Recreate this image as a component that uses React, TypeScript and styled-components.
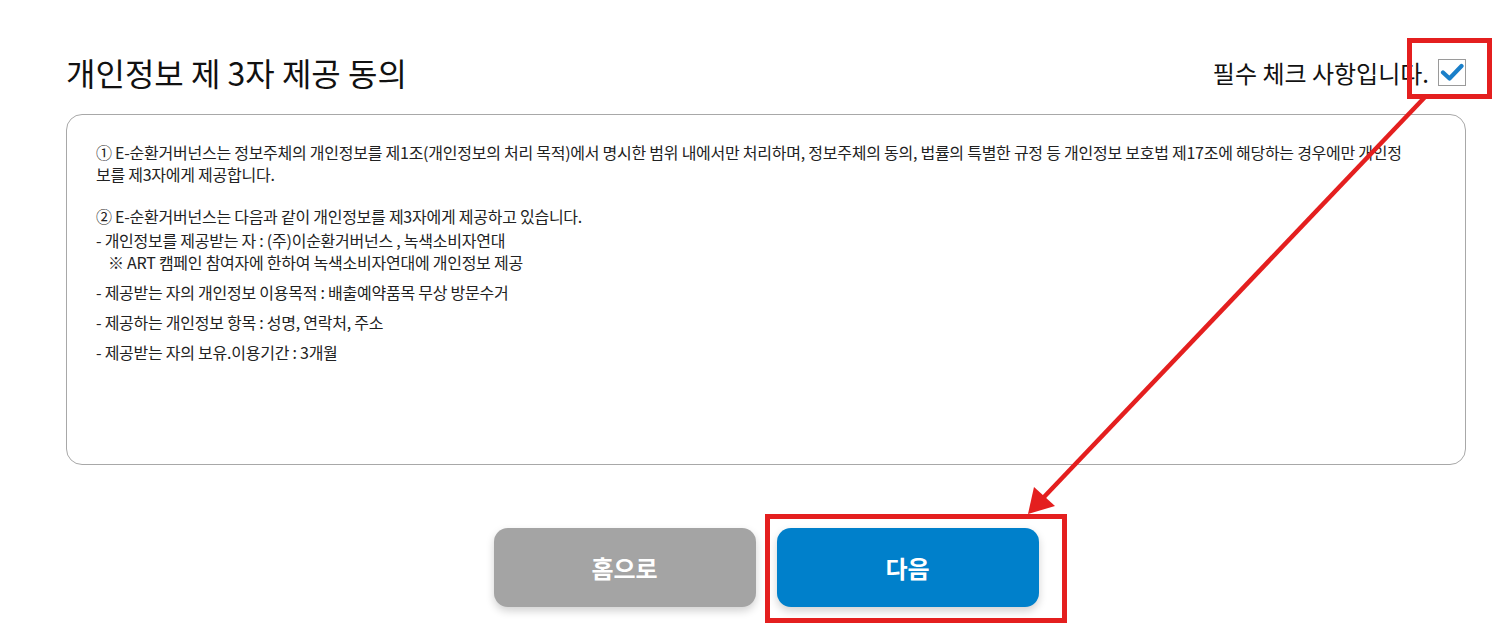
import styled, { createGlobalStyle } from "styled-components";

const GlobalStyle = createGlobalStyle`
  html, body {
    margin: 0;
    padding: 0;
    background: #ffffff;
  }
  body {
    font-family: "Noto Sans CJK KR", "Noto Sans", sans-serif;
    color: #222;
  }
`;

const Page = styled.div`
  position: relative;
  width: 1496px;
  height: 644px;
  padding-left: 66px;
  box-sizing: border-box;
  overflow: hidden;
`;

const Content = styled.div`
  width: 1400px;
`;

const Header = styled.div`
  display: flex;
  align-items: center;
  justify-content: space-between;
  height: 72px;
  margin-top: 36px;
`;

const Title = styled.h2`
  margin: 0;
  font-size: 32px;
  font-weight: 400;
  color: #111;
  letter-spacing: 0;
`;

const Required = styled.label`
  display: flex;
  align-items: center;
  gap: 9px;
  font-size: 24px;
  color: #111;
`;

const CheckBox = styled.span`
  display: flex;
  align-items: center;
  justify-content: center;
  width: 28px;
  height: 27px;
  box-sizing: border-box;
  border: 1px solid #9a9a9a;
  background: #fff;
`;

const TermsBox = styled.div`
  margin-top: 6px;
  height: 351px;
  box-sizing: border-box;
  border: 1px solid #a8a8a8;
  border-radius: 16px;
  padding: 26px 29px;
  font-size: 16px;
  line-height: 22px;
  color: #222;
  letter-spacing: -0.25px;
`;

const Para = styled.p`
  margin: 0 0 20px;
  white-space: nowrap;
`;

const Heading = styled.p`
  margin: 0 0 2px;
`;

const Item = styled.p`
  margin: 0 0 8px;
`;

const Note = styled.span`
  display: block;
  padding-left: 12px;
`;

const ButtonRow = styled.div`
  display: flex;
  justify-content: center;
  gap: 21px;
  margin-top: 63px;
`;

const Button = styled.button<{ $primary?: boolean }>`
  width: 262px;
  height: 79px;
  border: none;
  border-radius: 14px;
  background: ${(p) => (p.$primary ? "#0080cb" : "#a4a4a4")};
  color: #fff;
  font-family: "Noto Sans CJK KR", "Noto Sans", sans-serif;
  font-size: 24px;
  font-weight: 700;
  box-shadow: 0 4px 8px rgba(0, 0, 0, 0.18);
  cursor: pointer;
`;

const Annotation = styled.svg`
  position: absolute;
  left: 0;
  top: 0;
  pointer-events: none;
`;

const RED = "#e41f1f";

const App = () => {
  return (
    <>
      <GlobalStyle />
      <Page>
        <Content>
          <Header>
            <Title>개인정보 제 3자 제공 동의</Title>
            <Required>
              필수 체크 사항입니다.
              <CheckBox>
                <svg width="24" height="20" viewBox="0 0 24 20">
                  <path
                    d="M3 10.5 L9.5 16.5 L21.5 4"
                    fill="none"
                    stroke="#1a7fc9"
                    strokeWidth="4.2"
                    strokeLinecap="round"
                    strokeLinejoin="round"
                  />
                </svg>
              </CheckBox>
            </Required>
          </Header>

          <TermsBox>
            <Para>
              ① E-순환거버넌스는 정보주체의 개인정보를 제1조(개인정보의 처리 목적)에서 명시한 범위 내에서만 처리하며, 정보주체의 동의, 법률의 특별한 규정 등 개인정보 보호법 제17조에 해당하는 경우에만 개인정
              <br />
              보를 제3자에게 제공합니다.
            </Para>
            <Heading>② E-순환거버넌스는 다음과 같이 개인정보를 제3자에게 제공하고 있습니다.</Heading>
            <Item>
              - 개인정보를 제공받는 자 : (주)이순환거버넌스 , 녹색소비자연대
              <Note>※ ART 캠페인 참여자에 한하여 녹색소비자연대에 개인정보 제공</Note>
            </Item>
            <Item>- 제공받는 자의 개인정보 이용목적 : 배출예약품목 무상 방문수거</Item>
            <Item>- 제공하는 개인정보 항목 : 성명, 연락처, 주소</Item>
            <Item>- 제공받는 자의 보유.이용기간 : 3개월</Item>
          </TermsBox>

          <ButtonRow>
            <Button>홈으로</Button>
            <Button $primary>다음</Button>
          </ButtonRow>
        </Content>

        <Annotation width="1496" height="644" viewBox="0 0 1496 644">
          <rect x="1409.5" y="40.5" width="80" height="56" fill="none" stroke={RED} strokeWidth="5" />
          <rect x="767.5" y="516.5" width="297" height="104" fill="none" stroke={RED} strokeWidth="5" />
          <line x1="1425" y1="97" x2="1044" y2="497" stroke={RED} strokeWidth="4.5" />
          <polygon points="1028,514 1034,487 1055,506" fill={RED} />
        </Annotation>
      </Page>
    </>
  );
};

export default App;
